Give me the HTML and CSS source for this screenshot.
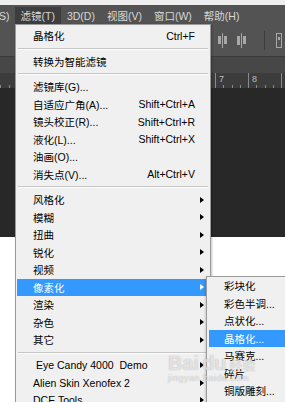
FILE: index.html
```html
<!DOCTYPE html>
<html lang="zh-CN">
<head>
  <meta charset="UTF-8">
  <meta name="viewport" content="width=device-width, initial-scale=1.0">
  <title>滤镜菜单</title>
  <link rel="stylesheet" href="styles.css">
</head>
<body>
  <div class="window">
    <div class="top-strip"></div>
    <div class="menubar">
      <span class="menubar-item cut">S)</span>
      <span class="menubar-item active">滤镜(T)</span>
      <span class="menubar-item">3D(D)</span>
      <span class="menubar-item">视图(V)</span>
      <span class="menubar-item">窗口(W)</span>
      <span class="menubar-item">帮助(H)</span>
    </div>
    <div class="optionsbar">
      <svg class="opt-left" width="10" height="10" viewBox="0 0 10 10">
        <rect x="0.5" y="1.5" width="6" height="6" fill="none" stroke="#9a9a9a"/>
        <rect x="7" y="1" width="3" height="4" fill="#9a9a9a"/>
      </svg>
      <svg class="opt-right" width="85" height="24" viewBox="0 0 85 24">
        <!-- 对齐按钮 -->
        <g fill="#a8a8a8">
          <rect x="2" y="3" width="1" height="15"/>
          <rect x="3" y="7" width="3" height="7"/>
          <rect x="17" y="6" width="3" height="8"/>
          <rect x="21" y="3" width="1" height="15"/>
          <rect x="23" y="6" width="3" height="8"/>
          <rect x="36" y="6" width="3" height="9"/>
          <rect x="40" y="3" width="1" height="15"/>
          <rect x="42" y="6" width="3" height="8"/>
        </g>
        <rect x="63" y="1" width="1" height="19" fill="#3c3c3c"/>
        <rect x="75.5" y="3.5" width="5" height="14" fill="none" stroke="#a8a8a8"/>
        <rect x="77" y="7" width="2" height="3" fill="#a8a8a8"/>
      </svg>
    </div>
    <div class="tabbar"></div>
    <div class="ruler">
      <span class="ruler-cell">0</span>
      <span class="ruler-cell">1</span>
      <span class="ruler-cell">2</span>
      <span class="ruler-cell">3</span>
      <span class="ruler-cell">4</span>
      <span class="ruler-cell">5</span>
      <span class="ruler-cell">6</span>
      <span class="ruler-cell">7</span>
      <span class="ruler-cell">8</span>
      <span class="ruler-cell">9</span>
    </div>
    <div class="canvas"></div>
  </div>

  <div class="menu filter-menu">
    <div class="menu-row"><span>晶格化</span><span class="key">Ctrl+F</span></div>
    <div class="menu-sep"></div>
    <div class="menu-row"><span>转换为智能滤镜</span></div>
    <div class="menu-sep"></div>
    <div class="menu-row"><span>滤镜库(G)...</span></div>
    <div class="menu-row"><span>自适应广角(A)...</span><span class="key">Shift+Ctrl+A</span></div>
    <div class="menu-row"><span>镜头校正(R)...</span><span class="key">Shift+Ctrl+R</span></div>
    <div class="menu-row"><span>液化(L)...</span><span class="key">Shift+Ctrl+X</span></div>
    <div class="menu-row"><span>油画(O)...</span></div>
    <div class="menu-row"><span>消失点(V)...</span><span class="key">Alt+Ctrl+V</span></div>
    <div class="menu-sep"></div>
    <div class="menu-row"><span>风格化</span><span></span><i class="arrow"></i></div>
    <div class="menu-row"><span>模糊</span><span></span><i class="arrow"></i></div>
    <div class="menu-row"><span>扭曲</span><span></span><i class="arrow"></i></div>
    <div class="menu-row"><span>锐化</span><span></span><i class="arrow"></i></div>
    <div class="menu-row"><span>视频</span><span></span><i class="arrow"></i></div>
    <div class="menu-row selected"><span>像素化</span><span></span><i class="arrow"></i></div>
    <div class="menu-row"><span>渲染</span><span></span><i class="arrow"></i></div>
    <div class="menu-row"><span>杂色</span><span></span><i class="arrow"></i></div>
    <div class="menu-row"><span>其它</span><span></span><i class="arrow"></i></div>
    <div class="menu-sep"></div>
    <div class="menu-row"><span class="indent">Eye Candy 4000&nbsp; Demo</span><span></span><i class="arrow"></i></div>
    <div class="menu-row"><span>Alien Skin Xenofex 2</span><span></span><i class="arrow"></i></div>
    <div class="menu-row"><span>DCE Tools</span><span></span><i class="arrow"></i></div>
  </div>

  <div class="menu sub-menu">
    <div class="menu-row"><span>彩块化</span></div>
    <div class="menu-row"><span>彩色半调...</span></div>
    <div class="menu-row"><span>点状化...</span></div>
    <div class="menu-row selected"><span>晶格化...</span></div>
    <div class="menu-row"><span>马赛克...</span></div>
    <div class="menu-row"><span>碎片</span></div>
    <div class="menu-row"><span>铜版雕刻...</span></div>
  </div>

  <div class="watermark">
    <span class="wm-logo">Bai<b>du</b></span><span class="wm-cn">经验</span>
    <div class="wm-url">jingyan.baidu.com</div>
  </div>
</body>
</html>
```

FILE: styles.css
```css
html, body {
  margin: 0;
  padding: 0;
  background-color: #fff;
  font-family: "Liberation Sans", "Noto Sans CJK SC", sans-serif;
  font-size: 10.5px;
}
body {
  position: relative;
  width: 285px;
  height: 402px;
  overflow: hidden;
}
.top-strip {
  height: 5px;
  background-color: #eeeeee;
}
.menubar {
  display: flex;
  height: 20px;
  background-color: #535353;
  color: #d8d8d8;
  white-space: nowrap;
}
.menubar-item {
  display: flex;
  align-items: center;
  padding: 0 6px;
  margin: 2px 0 1px;
}
.menubar-item.cut {
  padding: 0 5px 0 0;
  margin-left: -1px;
}
.menubar-item.active {
  background-color: #3d3d3d;
}
.optionsbar {
  display: flex;
  align-items: center;
  height: 32px;
  background-color: #535353;
  border-bottom: 1px solid #3b3b3b;
  box-sizing: border-box;
}
.opt-left {
  margin-left: 1px;
  margin-top: 5px;
}
.opt-right {
  margin-left: 200px;
  margin-top: 3px;
  flex-shrink: 0;
}
.tabbar {
  height: 16px;
  background-color: #474747;
}
.ruler {
  display: flex;
  height: 15px;
  margin-left: -16px;
  background-color: #3c3c3c;
  color: #bdbdbd;
  font-size: 9px;
}
.ruler-cell {
  flex: 0 0 33px;
  box-sizing: border-box;
  padding: 1px 0 0 3px;
  border-left: 1px solid #8a8a8a;
  background-image: repeating-linear-gradient(to right, transparent 0 7.25px, #8a8a8a 7.25px 8.25px);
  background-size: 100% 3px;
  background-position: bottom;
  background-repeat: no-repeat;
}
.canvas {
  height: 149px;
  background-color: #282828;
}

/* 下拉菜单 */
.menu {
  position: absolute;
  box-sizing: border-box;
  background-color: #f0f0f0;
  border: 1px solid #9a9a9a;
  font-family: "Liberation Sans", "Noto Sans CJK SC", sans-serif;
  color: #000;
  white-space: nowrap;
}
.filter-menu {
  left: 15px;
  top: 24px;
  width: 196px;
  height: 400px;
  padding: 2px 1px 0;
  box-shadow: 1px 1px 2px rgba(0, 0, 0, 0.25);
}
.sub-menu {
  left: 206px;
  top: 276px;
  width: 100px;
  height: 140px;
  padding: 0 2px;
  box-shadow: -1px 1px 2px rgba(0, 0, 0, 0.15);
}
.menu-row {
  display: grid;
  grid-template-columns: 1fr auto 14px;
  align-items: center;
  height: 17.5px;
  padding-left: 16px;
}
.sub-menu .menu-row {
  padding-left: 15px;
}
.menu-row.selected {
  background-color: #3399ff;
  color: #fff;
}
.menu-row .indent {
  padding-left: 3px;
}
.arrow {
  width: 0;
  height: 0;
  margin-left: 5px;
  border-left: 4px solid #000;
  border-top: 3.5px solid transparent;
  border-bottom: 3.5px solid transparent;
}
.selected .arrow {
  border-left-color: #fff;
}
.menu-sep {
  margin: 3px 1px;
  border-top: 1px solid #c6c6c6;
  border-bottom: 1px solid #fbfbfb;
}

/* 水印 */
.watermark {
  position: absolute;
  left: 168px;
  top: 352px;
  color: rgba(255, 255, 255, 0.7);
  text-shadow: 0 0 1px rgba(0, 0, 0, 0.35);
  pointer-events: none;
}
.wm-logo {
  font-family: "Liberation Sans", sans-serif;
  font-size: 20px;
  font-weight: bold;
}
.wm-logo b {
  margin-left: 3px;
}
.wm-cn {
  margin-left: 3px;
  font-family: "Noto Sans CJK SC", sans-serif;
  font-size: 13px;
}
.wm-url {
  margin-top: -2px;
  font-family: "Liberation Sans", sans-serif;
  font-size: 9px;
  letter-spacing: 0.5px;
}
```
